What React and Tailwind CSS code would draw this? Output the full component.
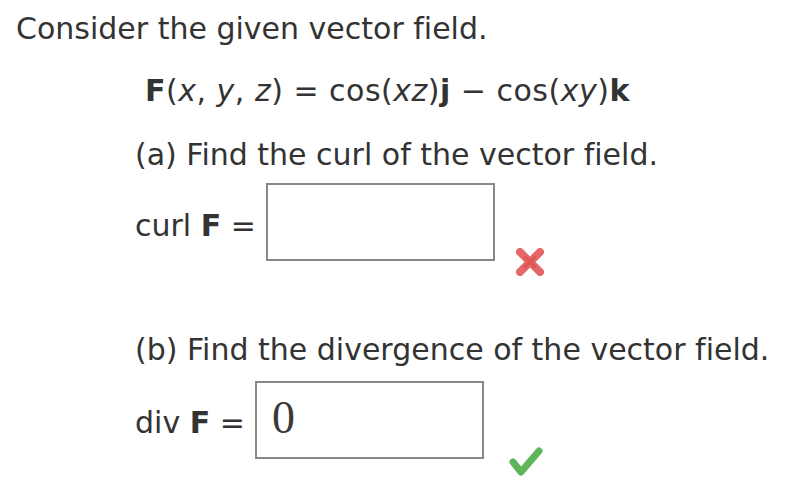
export default function App() {
  const base =
    "font-['DejaVu_Sans','Verdana',sans-serif] text-[#333333] text-[30px] leading-[36px] [font-variant-ligatures:none]";

  return (
    <div className={`w-[806px] h-[498px] bg-white pt-[11px] ${base}`}>
      <p className="pl-[16px]">Consider the given vector field.</p>

      <p className="pl-[145px] mt-[26px] whitespace-pre tracking-[0.5px]">
        <b>F</b>(<i>x</i>, <i>y</i>, <i>z</i>) = cos(<i>xz</i>)<b>j</b> − cos(<i>xy</i>)<b>k</b>
      </p>

      <p className="pl-[135px] mt-[28px]">(a) Find the curl of the vector field.</p>

      <div className="flex items-start pl-[135px] mt-[10px]">
        <span className="w-[131px] mt-[25px] whitespace-pre">
          curl <b>F</b> =
        </span>
        <div className="w-[229px] h-[78px] border-2 border-[#888888] bg-white" />
        <svg className="ml-[19px] mt-[64px]" width="32" height="30" viewBox="0 0 32 30">
          <g stroke="#e45757" strokeWidth="8" strokeLinecap="round" opacity="0.9">
            <line x1="6" y1="5" x2="26" y2="25" />
            <line x1="26" y1="5" x2="6" y2="25" />
          </g>
          <g stroke="#d94545" strokeWidth="3" strokeLinecap="round" opacity="0.5">
            <line x1="11" y1="10" x2="21" y2="20" />
            <line x1="21" y1="10" x2="11" y2="20" />
          </g>
        </svg>
      </div>

      <p className="pl-[135px] mt-[55px]">(b) Find the divergence of the vector field.</p>

      <div className="flex items-start pl-[135px] mt-[13px]">
        <span className="w-[120px] mt-[24px] whitespace-pre">
          div <b>F</b> =
        </span>
        <div className="w-[229px] h-[78px] border-2 border-[#888888] bg-white pl-[15px] pt-[3px] font-['Liberation_Serif',serif] text-[46px] leading-[64px] text-[#3a3a3a] tracking-normal">
          0
        </div>
        <svg className="ml-[25px] mt-[65px]" width="34" height="31" viewBox="0 0 34 31">
          <polyline
            points="4,16 12,26 30,5"
            fill="none"
            stroke="#5fb55a"
            strokeWidth="7"
            strokeLinecap="round"
            strokeLinejoin="round"
          />
        </svg>
      </div>
    </div>
  );
}
